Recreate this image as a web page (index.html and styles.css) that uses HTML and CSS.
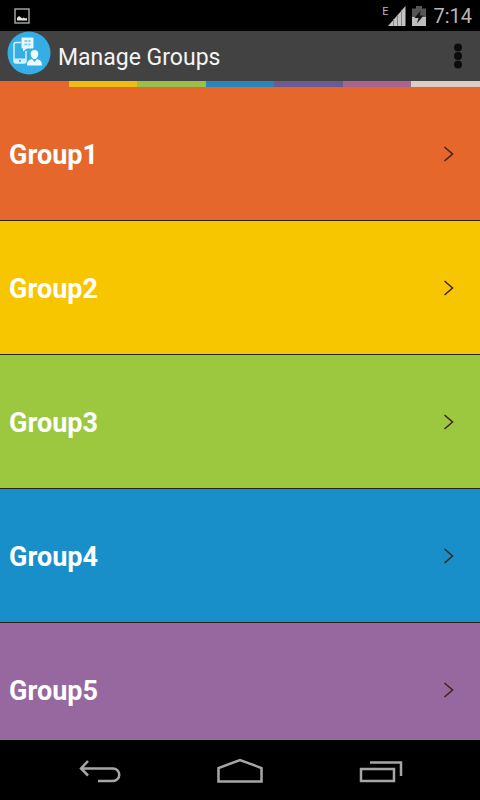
FILE: index.html
```html
<!DOCTYPE html>
<html lang="en">
<head>
<meta charset="utf-8">
<meta name="viewport" content="width=device-width, initial-scale=1">
<title>Manage Groups</title>
<link rel="stylesheet" href="styles.css">
</head>
<body>
<div class="status">
  <svg class="status-picture" width="16" height="16" viewBox="0 0 16 16" aria-hidden="true">
    <rect x="1" y="1" width="14" height="14" fill="none" stroke="#b8b8b8" stroke-width="1.3"/>
    <path d="M3 12.500V10l2-2 2 1.500 1.500 1 1-1 2 1 1.500-.5v2.500z" fill="#e4e4e4"/>
  </svg>
  <div class="status-right">
    <span class="network">E</span>
    <svg width="18" height="20" viewBox="0 0 18 20" aria-hidden="true">
      <path d="M0 20L17.500 0v20z" fill="#c4c4c4"/>
      <path d="M5.500 13v7M9.500 9v11M13.500 4v16" stroke="#858585" stroke-width="1"/>
    </svg>
    <svg class="battery" width="14" height="20" viewBox="0 0 14 20" aria-hidden="true">
      <path d="M0 2.500h4V0h6v2.500h4V20H0z" fill="#555"/>
      <path d="M0 11h14v9H0z" fill="#bdbdbd"/>
      <path d="M8.500 4.500L2.500 12h4L5 17.500l6.500-8H7.800z" fill="#151515"/>
    </svg>
    <time class="clock">7:14</time>
  </div>
</div>
<header class="appbar">
  <svg class="logo" width="44" height="44" viewBox="0 0 44 44" aria-hidden="true">
    <circle cx="22" cy="22" r="21.500" fill="#35aee6"/>
    <path d="M14 11.500H9a2 2 0 0 0-2 2v16.500a2 2 0 0 0 2 2h8a2 2 0 0 0 2-2V20" fill="none" stroke="#d5f0fb" stroke-width="1.500"/>
    <path d="M7 27.500h12v3a1.500 1.500 0 0 1-1.500 1.500h-9A1.500 1.500 0 0 1 7 30.500z" fill="#d5f0fb"/>
    <circle cx="13" cy="29.800" r="1.100" fill="#35aee6"/>
    <path d="M15.500 6.500h10a1 1 0 0 1 1 1v9a1 1 0 0 1-1 1H20L16 20.500v-3h-.5a1 1 0 0 1-1-1v-9a1 1 0 0 1 1-1z" fill="#e9f7fd"/>
    <path d="M17.500 10h2.800m1 0h2.200M17.500 13.500h2.800m1 0h2.200" stroke="#7fc9ea" stroke-width="2"/>
    <path d="M20 34.500c0-4.500 2-5.500 5-6.500l2.500 3 2.500-3c3 1 5 2 5 6.500z" fill="#eefaff"/>
    <path d="M27.500 19c2.800 0 4 2 3.800 4.500-.2 2.500-1.800 4.700-3.800 4.700s-3.600-2.200-3.800-4.700c-.2-2.500 1-4.500 3.800-4.500z" fill="#eefaff"/>
  </svg>
  <h1>Manage Groups</h1>
  <button class="more" type="button" aria-label="More options">
    <svg width="10" height="26" viewBox="0 0 10 26" aria-hidden="true">
      <circle cx="5" cy="4.500" r="4"/><circle cx="5" cy="13" r="4"/><circle cx="5" cy="21.500" r="4"/>
    </svg>
  </button>
</header>
<div class="stripe">
  <span class="orange"></span><span class="gold"></span><span class="leaf"></span><span class="sea"></span><span class="indigo"></span><span class="mauve"></span><span class="pale"></span>
</div>
<main>
  <ul class="groups">
    <li><a class="group orange" href="#group1"><span>Group1</span><svg class="chevron" width="12" height="18" viewBox="0 0 12 18" aria-hidden="true"><path d="M1.500 2l8 7-8 7"/></svg></a></li>
    <li><a class="group yellow" href="#group2"><span>Group2</span><svg class="chevron" width="12" height="18" viewBox="0 0 12 18" aria-hidden="true"><path d="M1.500 2l8 7-8 7"/></svg></a></li>
    <li><a class="group green" href="#group3"><span>Group3</span><svg class="chevron" width="12" height="18" viewBox="0 0 12 18" aria-hidden="true"><path d="M1.500 2l8 7-8 7"/></svg></a></li>
    <li><a class="group blue" href="#group4"><span>Group4</span><svg class="chevron" width="12" height="18" viewBox="0 0 12 18" aria-hidden="true"><path d="M1.500 2l8 7-8 7"/></svg></a></li>
    <li><a class="group purple" href="#group5"><span>Group5</span><svg class="chevron" width="12" height="18" viewBox="0 0 12 18" aria-hidden="true"><path d="M1.500 2l8 7-8 7"/></svg></a></li>
  </ul>
</main>
<nav class="navbar" aria-label="System">
  <button type="button" aria-label="Back">
    <svg width="48" height="28" viewBox="0 0 48 28" aria-hidden="true"><path d="M13 3L6 10.500l7 7M6 10.500h32a6.200 6.200 0 0 1 0 12.500H23"/></svg>
  </button>
  <button type="button" aria-label="Home">
    <svg width="48" height="28" viewBox="0 0 48 28" aria-hidden="true"><path d="M2.500 23.500V10L24 2l21.500 8v13.500z"/></svg>
  </button>
  <button type="button" aria-label="Recent apps">
    <svg width="48" height="28" viewBox="0 0 48 28" aria-hidden="true"><path d="M4 11h33v12H4zM13 4.500h31V18"/></svg>
  </button>
</nav>
</body>
</html>
```

FILE: styles.css
```css
* {
  box-sizing: border-box;
}

body {
  margin: 0;
  height: 100vh;
  display: flex;
  flex-direction: column;
  background: #000;
  font-family: Roboto, "Liberation Sans", sans-serif;
}

.status {
  flex: none;
  height: 31px;
  padding: 0 8px 0 14px;
  display: flex;
  align-items: center;
  justify-content: space-between;
  color: #b8b8b8;
}

.status-right {
  display: flex;
  align-items: center;
}

.network {
  align-self: flex-start;
  font-size: 11px;
  line-height: 16px;
}

.battery {
  margin: 0 7px 0 6px;
}

.clock {
  font-size: 20px;
  line-height: 24px;
}

.appbar {
  flex: none;
  height: 50px;
  padding: 0 17px 0 7px;
  display: flex;
  align-items: center;
  background: #424242;
}

.logo {
  flex: none;
  margin-bottom: 6px;
}

.appbar h1 {
  flex: 1;
  margin: 0;
  padding: 4px 0 0 7px;
  color: #f4f4f4;
  font-size: 23px;
  line-height: 28px;
  font-weight: 400;
}

button {
  padding: 0;
  border: 0;
  background: none;
  display: flex;
  align-items: center;
  justify-content: center;
}

.more svg {
  fill: #0c0c0c;
}

.stripe {
  flex: none;
  height: 6px;
  display: flex;
}

.stripe span {
  flex: 1;
}

.gold { background: #f0bb12; }
.leaf { background: #9cbf47; }
.sea { background: #2b86b5; }
.indigo { background: #6d5b90; }
.mauve { background: #a8658e; }
.pale { background: #dccdc5; }
.orange { background: #e5672b; }
.yellow { background: #f7c600; }
.green { background: #9bc83e; }
.blue { background: #198fca; }
.purple { background: #97689f; }

main {
  flex: 1;
  min-height: 0;
  overflow: hidden;
}

.groups {
  margin: 0;
  padding: 0;
  list-style: none;
}

.group {
  height: 134px;
  padding: 0 25px 0 9px;
  display: flex;
  align-items: center;
  justify-content: space-between;
  border-bottom: 1px solid #2a2418;
  color: #fff;
  font-size: 27px;
  line-height: 36px;
  font-weight: 700;
  text-decoration: none;
}

.group span {
  padding-top: 2px;
}

.chevron {
  fill: none;
  stroke: #3a2418;
  stroke-width: 1.500;
}

.navbar {
  flex: none;
  height: 60px;
  padding: 4px 29px 0;
  display: flex;
  align-items: center;
}

.navbar button {
  flex: 1;
}

.navbar svg {
  fill: none;
  stroke: #a6a6a6;
  stroke-width: 2.500;
}
```
